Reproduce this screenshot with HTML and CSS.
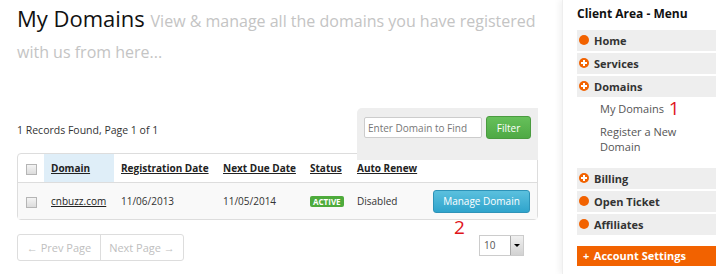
FILE: index.html
```html
<!DOCTYPE html>
<html lang="en">
<head>
  <meta charset="UTF-8" />
  <title>My Domains - Client Area</title>
  <link rel="stylesheet" href="styles.css">
</head>
<body>

  <div class="page">
    <main class="content">
      <h1>My Domains <small>View &amp; manage all the domains you have registered with us from here...</small></h1>

      <div class="toolbar">
        <p class="records">1 Records Found, Page 1 of 1</p>
        <form class="filter">
          <input type="text" placeholder="Enter Domain to Find">
          <button type="button" class="btn-filter">Filter</button>
        </form>
      </div>

      <table class="domains">
        <colgroup>
          <col style="width:26px">
          <col style="width:70px">
          <col style="width:102px">
          <col style="width:87px">
          <col style="width:47px">
          <col style="width:76px">
          <col>
        </colgroup>
        <thead>
          <tr>
            <th><span class="check"></span></th>
            <th class="sorted"><a href="#">Domain</a></th>
            <th><a href="#">Registration Date</a></th>
            <th><a href="#">Next Due Date</a></th>
            <th><a href="#">Status</a></th>
            <th><a href="#">Auto Renew</a></th>
            <th></th>
          </tr>
        </thead>
        <tbody>
          <tr>
            <td><span class="check"></span></td>
            <td><a href="#">cnbuzz.com</a></td>
            <td>11/06/2013</td>
            <td>11/05/2014</td>
            <td><span class="badge">ACTIVE</span></td>
            <td>Disabled</td>
            <td class="actions"><button type="button" class="btn-manage">Manage Domain</button></td>
          </tr>
        </tbody>
      </table>

      <div class="table-foot">
        <div class="pager">
          <a href="#">&larr; Prev Page</a>
          <a href="#">Next Page &rarr;</a>
        </div>
        <span class="note note-2">2</span>
        <div class="per-page">
          <span>10</span>
          <span class="arrow"></span>
        </div>
      </div>
    </main>

    <aside class="sidebar">
      <h3>Client Area - Menu</h3>
      <ul class="menu">
        <li class="item dot"><a href="#">Home</a></li>
        <li class="item plus"><a href="#">Services</a></li>
        <li class="item plus"><a href="#">Domains</a></li>
        <li class="sub first"><a href="#">My Domains</a> <span class="note">1</span></li>
        <li class="sub"><a href="#">Register a New Domain</a></li>
        <li class="item plus gap"><a href="#">Billing</a></li>
        <li class="item dot"><a href="#">Open Ticket</a></li>
        <li class="item dot"><a href="#">Affiliates</a></li>
      </ul>
      <div class="account"><span class="cross">+</span> Account Settings</div>
    </aside>
  </div>

</body>
</html>
```

FILE: styles.css
```css
body {
  margin: 0;
  font-family: 'Open Sans', sans-serif;
  font-size: 11px;
  color: #333;
  background: #fff;
}

.page {
  display: flex;
  width: 720px;
  height: 274px;
  overflow: hidden;
}

.content {
  width: 521px;
  padding-left: 17px;
  padding-right: 24px;
}

h1 {
  margin: 3px 0 0;
  font-size: 22px;
  font-weight: 400;
  line-height: 31px;
  color: #111;
}

h1 small {
  font-size: 16px;
  line-height: 16px;
  color: #c4c4c4;
}

.toolbar {
  display: flex;
  justify-content: space-between;
  margin-top: 43px;
  margin-bottom: -7px;
}

.records {
  margin: 15px 0 0;
  font-size: 10.5px;
  line-height: 15px;
}

.filter {
  position: relative;
  z-index: 1;
  display: flex;
  gap: 4px;
  width: 167px;
  height: 36px;
  padding: 8px 7px;
  background: #eee;
  border-radius: 5px 0 0 0;
}

.filter input {
  box-sizing: border-box;
  width: 118px;
  height: 21px;
  margin-top: 1px;
  padding: 0 3px;
  border: 1px solid #ccc;
  border-radius: 2px;
  font-family: inherit;
  font-size: 10px;
}

.filter input::placeholder {
  color: #777;
}

.btn-filter {
  width: 45px;
  height: 23px;
  padding: 0;
  border: 1px solid #4a9b3f;
  border-radius: 3px;
  background: linear-gradient(#66c05a, #4fa945);
  color: #fff;
  font-family: inherit;
  font-size: 10px;
}

.domains {
  width: 521px;
  table-layout: fixed;
  border-collapse: separate;
  border-spacing: 0;
  border: 1px solid #ddd;
  border-radius: 4px;
  font-size: 10px;
}

.domains th,
.domains td {
  padding: 0 7px;
  text-align: left;
  white-space: nowrap;
}

.domains th {
  height: 28px;
  font-weight: 700;
  border-bottom: 1px solid #ddd;
}

.domains th:first-child,
.domains td:first-child {
  padding: 0 0 0 8px;
}

.domains th.sorted {
  background: #dfeef8;
}

.domains a {
  color: #222;
}

.domains td {
  height: 36px;
  background: #f9f9f9;
}

.check {
  display: inline-block;
  width: 9px;
  height: 9px;
  border: 1px solid #b5b5b5;
  background: linear-gradient(#f4f4f4, #dcdcdc);
  vertical-align: middle;
}

.badge {
  display: inline-block;
  padding: 1px 3px;
  background: #4eab3c;
  color: #fff;
  font-size: 8px;
  font-weight: 700;
  border-radius: 2px;
  line-height: 9px;
}

.btn-manage {
  width: 97px;
  height: 23px;
  padding: 0;
  border: 1px solid #2e93b8;
  border-radius: 3px;
  background: linear-gradient(#5bc0de, #2fa4cc);
  color: #fff;
  font-family: inherit;
  font-size: 10px;
}

.table-foot {
  position: relative;
  display: flex;
  justify-content: space-between;
  align-items: flex-start;
  margin-top: 14px;
  padding-right: 14px;
}

.pager {
  display: flex;
  border: 1px solid #ddd;
  border-radius: 3px;
}

.pager a {
  width: 82px;
  height: 25px;
  line-height: 25px;
  text-align: center;
  color: #c0c0c0;
  text-decoration: none;
}

.pager a + a {
  border-left: 1px solid #ddd;
}

.per-page {
  display: flex;
  justify-content: space-between;
  align-items: stretch;
  box-sizing: border-box;
  width: 45px;
  height: 21px;
  margin-top: 1px;
  padding-left: 4px;
  border: 1px solid #ccc;
  color: #555;
  font-size: 10px;
  line-height: 19px;
}

.per-page .arrow {
  position: relative;
  width: 12px;
  background: linear-gradient(#f0f0f0, #d2d2d2);
  border-left: 1px solid #aaa;
}

.per-page .arrow::after {
  content: "";
  position: absolute;
  left: 3px;
  top: 8px;
  border: 3px solid transparent;
  border-top: 3px solid #000;
}

.note {
  color: #e0141a;
  font-size: 19px;
  line-height: 1;
}

.note-2 {
  position: absolute;
  left: 437px;
  top: -16px;
}

.sidebar {
  width: 140px;
  padding: 0 4px 0 14px;
  border-left: 1px solid #eee;
  box-shadow: -3px 0 6px rgba(0, 0, 0, 0.05);
}

.sidebar h3 {
  margin: 6px 0 8px;
  font-size: 12px;
  font-weight: 700;
  color: #111;
  line-height: 16px;
}

.menu {
  list-style: none;
  margin: 0;
  padding: 0;
}

.menu .item {
  position: relative;
  height: 21px;
  margin-bottom: 2px;
  padding-left: 17px;
  background: #eee;
  line-height: 21px;
  font-weight: 700;
}

.menu .item a {
  color: #333;
  text-decoration: none;
}

.menu .item::before {
  content: "";
  position: absolute;
  left: 2px;
  top: 5px;
  width: 10px;
  height: 10px;
  border-radius: 50%;
  background: #f26200;
}

.menu .plus::after {
  content: "";
  position: absolute;
  left: 4px;
  top: 9px;
  width: 6px;
  height: 2px;
  background: #fff;
}

.menu .plus a::before {
  content: "";
  position: absolute;
  left: 6px;
  top: 7px;
  width: 2px;
  height: 6px;
  background: #fff;
}

.menu .sub {
  height: auto;
  padding-left: 23px;
  line-height: 15px;
  margin-bottom: 8px;
}

.menu .sub.first {
  margin-top: 4px;
}

.menu .sub a {
  color: #555;
  text-decoration: none;
}

.menu .sub .note {
  display: inline-block;
  height: 15px;
  line-height: 15px;
  vertical-align: top;
  margin-left: 2px;
}

.menu .gap {
  margin-top: 14px;
}

.account {
  height: 20px;
  margin-top: 11px;
  padding-left: 6px;
  background: #f26200;
  color: #fff;
  font-weight: 700;
  line-height: 20px;
}

.account .cross {
  display: inline-block;
  width: 8px;
  font-size: 11px;
}
```
